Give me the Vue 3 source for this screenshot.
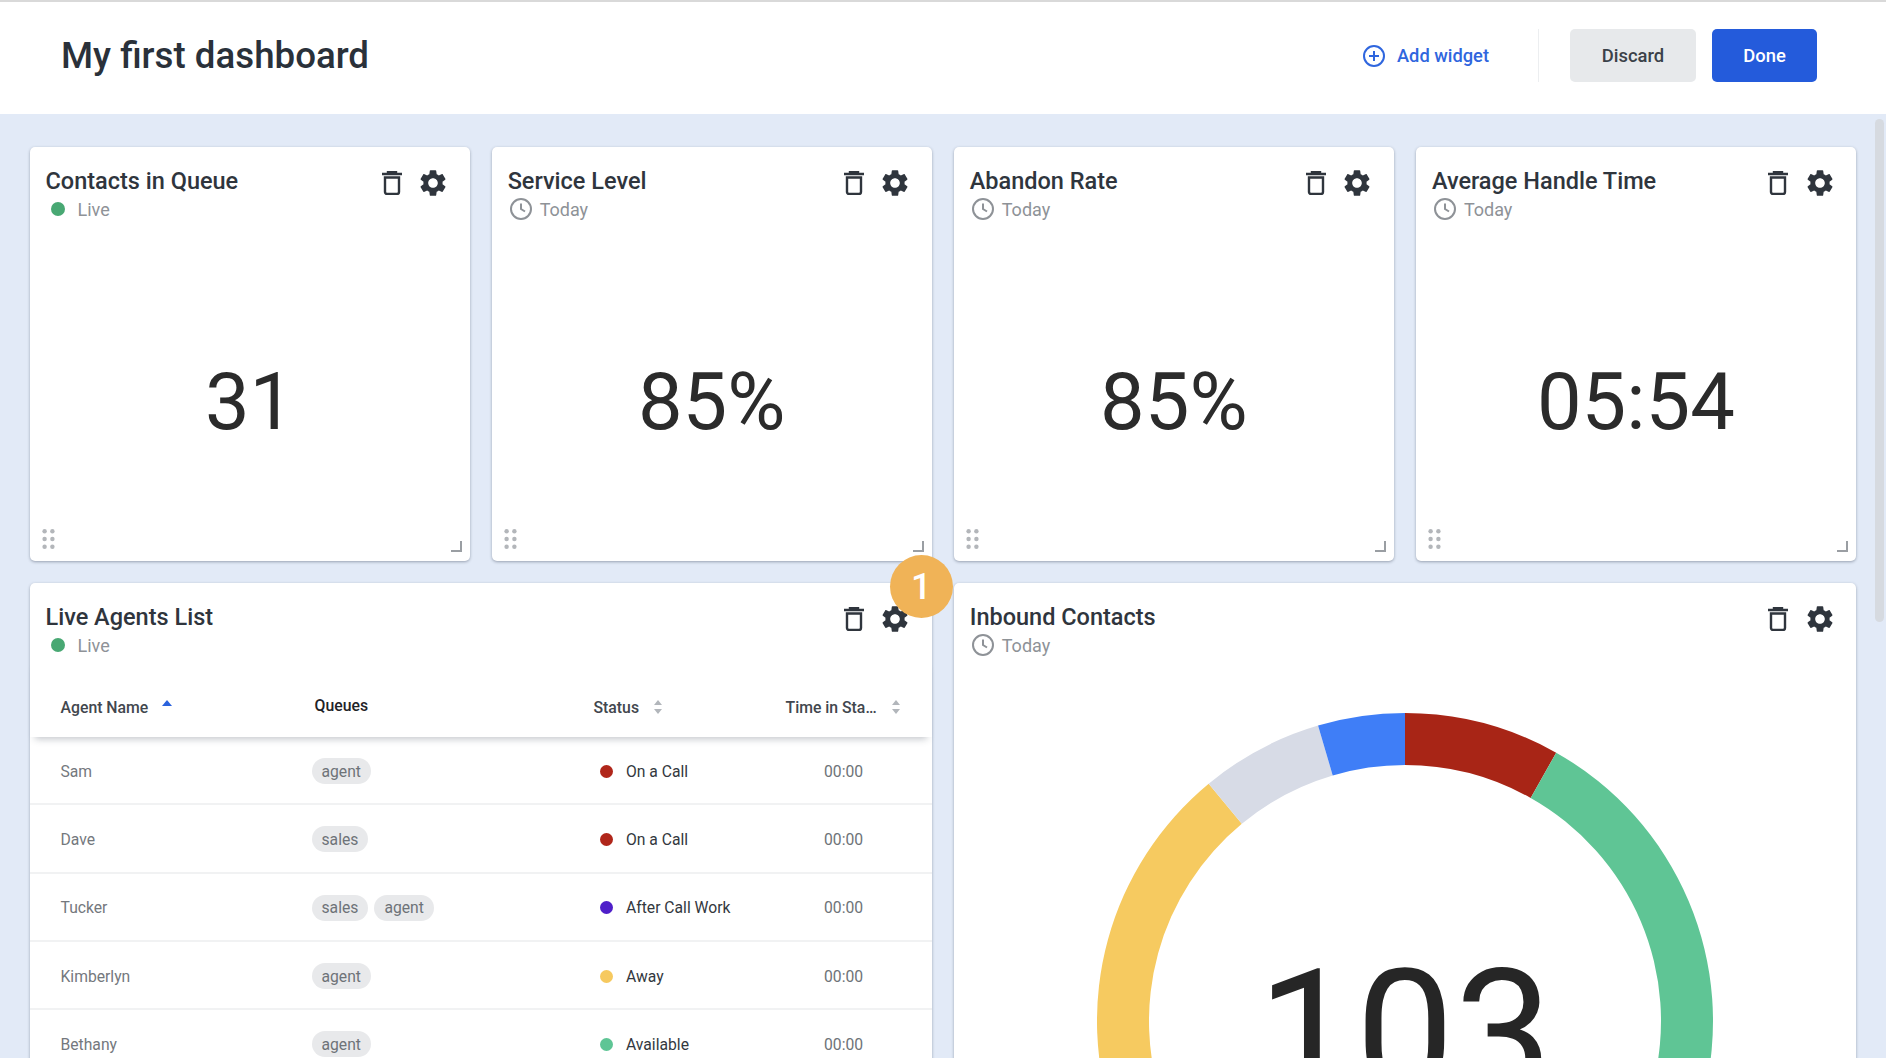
<script setup>
const metrics = [
  { title: 'Contacts in Queue', live: true, value: '31' },
  { title: 'Service Level', live: false, value: '85%' },
  { title: 'Abandon Rate', live: false, value: '85%' },
  { title: 'Average Handle Time', live: false, value: '05:54' }
]
const agents = [
  { name: 'Sam', queues: ['agent'], status: 'On a Call', color: '#b0261a' },
  { name: 'Dave', queues: ['sales'], status: 'On a Call', color: '#b0261a' },
  { name: 'Tucker', queues: ['sales', 'agent'], status: 'After Call Work', color: '#4f1fc9' },
  { name: 'Kimberlyn', queues: ['agent'], status: 'Away', color: '#f6c95f' },
  { name: 'Bethany', queues: ['agent'], status: 'Available', color: '#5ec595' }
]
const C = 308
const R = 308
const r = 256
function pt(rad, deg) {
  const a = (deg * Math.PI) / 180
  return `${(C + rad * Math.sin(a)).toFixed(2)} ${(C - rad * Math.cos(a)).toFixed(2)}`
}
function arc(from, to) {
  const large = to - from > 180 ? 1 : 0
  return `M${pt(R, from)} A${R} ${R} 0 ${large} 1 ${pt(R, to)} L${pt(r, to)} A${r} ${r} 0 ${large} 0 ${pt(r, from)} Z`
}
const segments = [
  { color: '#a82516', d: arc(0, 29.4) },
  { color: '#5fc595', d: arc(29.4, 180) },
  { color: '#f6ca60', d: arc(180, 320.4) },
  { color: '#d7dbe6', d: arc(320.4, 343.6) },
  { color: '#3f7ef7', d: arc(343.6, 360) }
]
const gear = 'M19.14 12.94c.04-.3.06-.61.06-.94 0-.32-.02-.64-.07-.94l2.03-1.58c.18-.14.23-.41.12-.61l-1.92-3.32c-.12-.22-.37-.29-.59-.22l-2.39.96c-.5-.38-1.03-.7-1.62-.94l-.36-2.54c-.04-.24-.24-.41-.48-.41h-3.84c-.24 0-.43.17-.47.41l-.36 2.54c-.59.24-1.13.57-1.62.94l-2.39-.96c-.22-.08-.47 0-.59.22L2.74 8.87c-.12.21-.08.47.12.61l2.03 1.58c-.05.3-.09.63-.09.94s.02.64.07.94l-2.03 1.58c-.18.14-.23.41-.12.61l1.92 3.32c.12.22.37.29.59.22l2.39-.96c.5.38 1.03.7 1.62.94l.36 2.54c.05.24.24.41.48.41h3.84c.24 0 .44-.17.47-.41l.36-2.54c.59-.24 1.13-.56 1.62-.94l2.39.96c.22.08.47 0 .59-.22l1.92-3.32c.12-.22.07-.47-.12-.61l-2.01-1.58zM12 15.6c-1.98 0-3.6-1.62-3.6-3.6s1.62-3.6 3.6-3.6 3.6 1.62 3.6 3.6-1.62 3.6-3.6 3.6z'
const dots = [[2, 2], [9, 2], [2, 9], [9, 9], [2, 16], [9, 16]]
</script>

<template>
  <div class="page">
    <header class="topbar">
      <h1 class="page-title">My first dashboard</h1>
      <div class="top-actions">
        <a class="add">
          <svg class="add-icon" viewBox="0 0 24 24"><circle cx="12" cy="12" r="10" /><path d="M12 7v10M7 12h10" /></svg>
          Add widget
        </a>
        <span class="divider"></span>
        <button class="btn discard">Discard</button>
        <button class="btn done">Done</button>
      </div>
    </header>

    <main class="board">
      <section v-for="m in metrics" :key="m.title" class="card metric">
        <div class="card-head">
          <div>
            <h2 class="card-title">{{ m.title }}</h2>
            <div class="card-sub">
              <span v-if="m.live" class="live-dot"></span>
              <svg v-else class="clock" viewBox="0 0 24 24"><circle cx="12" cy="12" r="10" /><path d="M12 6.5V12l4 2.5" /></svg>
              <span>{{ m.live ? 'Live' : 'Today' }}</span>
            </div>
          </div>
          <div class="tools">
            <svg class="trash" viewBox="0 0 20 24"><path d="M0 3h20M6 3V1h8v2M3 6.5h14V21a2 2 0 0 1-2 2H5a2 2 0 0 1-2-2z" /></svg>
            <svg class="gear" viewBox="0 0 24 24"><path :d="gear" /></svg>
          </div>
        </div>
        <div class="metric-value">{{ m.value }}</div>
        <div class="card-foot">
          <svg class="drag" viewBox="0 0 11 18"><circle v-for="d in dots" :key="d.join()" :cx="d[0]" :cy="d[1]" r="2" /></svg>
          <svg class="resize" viewBox="0 0 11 11"><path d="M0 10h10V0" /></svg>
        </div>
      </section>

      <section class="card wide">
        <span class="badge">1</span>
        <div class="card-head">
          <div>
            <h2 class="card-title">Live Agents List</h2>
            <div class="card-sub"><span class="live-dot"></span><span>Live</span></div>
          </div>
          <div class="tools">
            <svg class="trash" viewBox="0 0 20 24"><path d="M0 3h20M6 3V1h8v2M3 6.5h14V21a2 2 0 0 1-2 2H5a2 2 0 0 1-2-2z" /></svg>
            <svg class="gear" viewBox="0 0 24 24"><path :d="gear" /></svg>
          </div>
        </div>
        <div class="table-head row-grid">
          <div class="th">Agent Name
            <svg class="sort-up" viewBox="0 0 10 6"><path d="M5 0l5 6H0z" /></svg>
          </div>
          <div class="th queues-th">Queues</div>
          <div class="th">Status
            <svg class="sort" viewBox="0 0 8 14"><path d="M4 0l4 5H0zM4 14l4-5H0z" /></svg>
          </div>
          <div class="th">Time in Sta…
            <svg class="sort" viewBox="0 0 8 14"><path d="M4 0l4 5H0zM4 14l4-5H0z" /></svg>
          </div>
        </div>
        <div v-for="a in agents" :key="a.name" class="table-row row-grid">
          <div class="agent">{{ a.name }}</div>
          <div class="chips"><span v-for="q in a.queues" :key="q" class="chip">{{ q }}</span></div>
          <div class="status"><span class="status-dot" :style="{ background: a.color }"></span>{{ a.status }}</div>
          <div class="time">00:00</div>
        </div>
      </section>

      <section class="card wide">
        <div class="card-head">
          <div>
            <h2 class="card-title">Inbound Contacts</h2>
            <div class="card-sub">
              <svg class="clock" viewBox="0 0 24 24"><circle cx="12" cy="12" r="10" /><path d="M12 6.5V12l4 2.5" /></svg>
              <span>Today</span>
            </div>
          </div>
          <div class="tools">
            <svg class="trash" viewBox="0 0 20 24"><path d="M0 3h20M6 3V1h8v2M3 6.5h14V21a2 2 0 0 1-2 2H5a2 2 0 0 1-2-2z" /></svg>
            <svg class="gear" viewBox="0 0 24 24"><path :d="gear" /></svg>
          </div>
        </div>
        <svg class="donut" viewBox="0 0 616 616">
          <path v-for="s in segments" :key="s.color" :d="s.d" :fill="s.color" />
          <text x="308" y="380" text-anchor="middle" class="donut-value">103</text>
        </svg>
      </section>

      <span class="scrollbar"></span>
    </main>
  </div>
</template>

<style scoped>
.page {
  height: 100vh;
  display: flex;
  flex-direction: column;
  overflow: hidden;
  font-family: Roboto, "Liberation Sans", sans-serif;
  background: #e2eaf7;
}
.topbar {
  flex: none;
  box-sizing: border-box;
  height: 114px;
  padding: 0 69px 5px 61px;
  display: flex;
  align-items: center;
  justify-content: space-between;
  background: #fff;
  border-top: 2px solid #d9d9d9;
}
.page-title {
  margin: 0;
  font-size: 36.7px;
  font-weight: 500;
  color: #2a313a;
}
.top-actions {
  display: flex;
  align-items: center;
}
.add {
  display: flex;
  align-items: center;
  gap: 11px;
  font-size: 18.3px;
  font-weight: 500;
  color: #2f66de;
}
.add-icon {
  width: 24px;
  height: 24px;
  fill: none;
  stroke: #2f66de;
  stroke-width: 2;
}
.divider {
  width: 1px;
  height: 53px;
  margin: 0 31px 0 49px;
  background: #eceef0;
}
.btn {
  height: 53px;
  border: 0;
  border-radius: 5px;
  font-family: inherit;
  font-size: 18.4px;
  font-weight: 500;
}
.discard {
  width: 126px;
  margin-right: 16px;
  background: #e7e9eb;
  color: #3b4148;
}
.done {
  width: 105px;
  background: #245bdb;
  color: #fff;
}
.board {
  position: relative;
  flex: 1;
  min-height: 0;
  padding: 33px 30px 0 29.5px;
  display: grid;
  grid-template-columns: repeat(4, 1fr);
  grid-template-rows: 414px 600px;
  gap: 22px;
  overflow: hidden;
}
.card {
  position: relative;
  min-width: 0;
  background: #fff;
  border-radius: 5px;
  box-shadow: 0 1px 3px rgba(60, 70, 90, 0.45);
}
.metric {
  display: flex;
  flex-direction: column;
}
.wide {
  grid-column: span 2;
}
.card-head {
  height: 74px;
  flex: none;
  box-sizing: border-box;
  padding: 17.5px 16px 0;
  display: flex;
  justify-content: space-between;
}
.card-title {
  margin: 0;
  font-size: 23.5px;
  line-height: 32px;
  font-weight: 500;
  color: #2f353d;
}
.card-sub {
  margin-top: -0.5px;
  height: 26px;
  display: flex;
  align-items: center;
  font-size: 18px;
  color: #8e9297;
}
.live-dot {
  width: 14px;
  height: 14px;
  margin: 0 13px 0 5px;
  border-radius: 50%;
  background: #48a873;
}
.clock {
  width: 24px;
  height: 24px;
  margin: 0 7px 0 1px;
  fill: none;
  stroke: #8e9297;
  stroke-width: 2;
}
.tools {
  display: flex;
  align-items: flex-start;
  gap: 15.5px;
  padding: 5px 4.5px 0 0;
}
.trash {
  width: 20px;
  height: 24px;
  margin-top: 1.5px;
  fill: none;
  stroke: #2f353d;
  stroke-width: 2.4;
}
.gear {
  width: 32px;
  height: 32px;
  margin-top: -3px;
  fill: #2f353d;
}
.metric-value {
  flex: 1;
  display: flex;
  align-items: center;
  justify-content: center;
  padding-top: 59px;
  font-size: 79.5px;
  color: #2b2b2b;
}
.card-foot {
  height: 38px;
  flex: none;
  box-sizing: border-box;
  padding: 6px 8px 0 12px;
  display: flex;
  justify-content: space-between;
  align-items: flex-start;
}
.drag {
  width: 13px;
  height: 20px;
  fill: #b3b6ba;
}
.resize {
  width: 11px;
  height: 11px;
  margin-top: 12px;
  fill: none;
  stroke: #9a9ea3;
  stroke-width: 2;
}
.badge {
  position: absolute;
  top: -28px;
  right: -21px;
  z-index: 3;
  width: 63px;
  height: 63px;
  display: flex;
  align-items: center;
  justify-content: center;
  border-radius: 50%;
  background: #f0b357;
  color: #fff;
  font-size: 36px;
  font-weight: 500;
}
.row-grid {
  display: grid;
  grid-template-columns: 251px 282px 192px 1fr;
  padding-left: 31px;
  align-items: center;
}
.table-head {
  position: relative;
  z-index: 1;
  height: 80px;
  box-sizing: border-box;
  padding-top: 20px;
  background: #fff;
  box-shadow: 0 7px 7px -5px rgba(40, 50, 70, 0.28);
  font-size: 15.8px;
  font-weight: 500;
  color: #42474e;
}
.th {
  display: flex;
  align-items: center;
}
.queues-th {
  color: #1f2328;
  margin-top: -3px;
  margin-left: 3px;
}
.sort-up {
  width: 10px;
  height: 6px;
  margin: -9px 0 0 14px;
  fill: #2a62dd;
}
.sort {
  width: 8px;
  height: 14px;
  margin-left: 15px;
  fill: #b2b6bb;
}
.table-row {
  height: 68.3px;
  box-sizing: border-box;
  padding-top: 2px;
  border-bottom: 2px solid #f1f2f3;
  font-size: 15.7px;
  color: #74787d;
}
.chips {
  display: flex;
  gap: 6px;
}
.chip {
  height: 26px;
  padding: 0 10px;
  display: flex;
  align-items: center;
  border-radius: 13px;
  background: #e8e9eb;
  color: #6e7378;
}
.status {
  display: flex;
  align-items: center;
  padding-left: 6.5px;
  color: #33383e;
}
.status-dot {
  width: 13px;
  height: 13px;
  margin-right: 13px;
  border-radius: 50%;
}
.time {
  padding-left: 38.5px;
  color: #6e7378;
}
.donut {
  display: block;
  width: 616px;
  height: 616px;
  margin: 56px auto 0;
}
.donut-value {
  font-size: 175px;
  fill: #262626;
  font-family: Roboto, "Liberation Sans", sans-serif;
}
.scrollbar {
  position: absolute;
  top: 5px;
  right: 2px;
  width: 9px;
  height: 503px;
  border-radius: 4.5px;
  background: #d6dae0;
}
</style>

<style>
html,
body {
  margin: 0;
  overflow: hidden;
}
</style>
